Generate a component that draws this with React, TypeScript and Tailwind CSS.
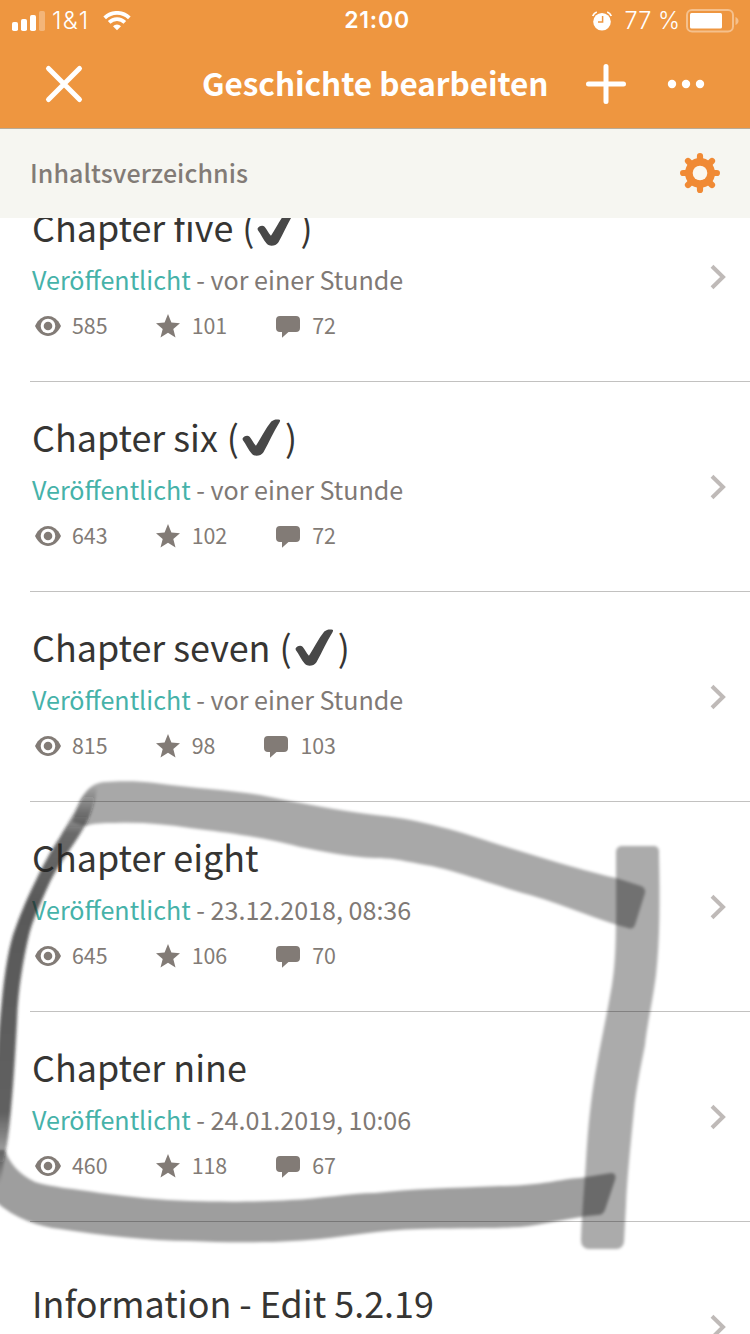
import type { ReactNode } from "react";

type Chapter = {
  title: string;
  checked?: boolean;
  date?: string;
  stats?: { views: number; votes: number; comments: number };
};

const chapters: Chapter[] = [
  { title: "Chapter five", checked: true, date: "vor einer Stunde", stats: { views: 585, votes: 101, comments: 72 } },
  { title: "Chapter six", checked: true, date: "vor einer Stunde", stats: { views: 643, votes: 102, comments: 72 } },
  { title: "Chapter seven", checked: true, date: "vor einer Stunde", stats: { views: 815, votes: 98, comments: 103 } },
  { title: "Chapter eight", date: "23.12.2018, 08:36", stats: { views: 645, votes: 106, comments: 70 } },
  { title: "Chapter nine", date: "24.01.2019, 10:06", stats: { views: 460, votes: 118, comments: 67 } },
  { title: "Information - Edit 5.2.19" },
];

function StatusBar() {
  return (
    <div className="flex h-[41px] items-center justify-between pl-3 pr-[11px] font-['Inter',sans-serif] text-white">
      <div className="flex w-[200px] items-center">
        <svg width="34" height="20" viewBox="0 0 34 20" fill="currentColor">
          <rect x="0" y="11" width="6" height="9" rx="1.8" />
          <rect x="9" y="8" width="6" height="12" rx="1.8" />
          <rect x="18" y="4" width="6" height="16" rx="1.8" />
          <rect x="27" y="0" width="6" height="20" rx="1.8" opacity="0.3" />
        </svg>
        <span className="ml-[6px] w-[38px] text-[24px] font-light tracking-[1.2px]">1&amp;1</span>
        <svg className="ml-[13px]" width="28" height="20" viewBox="0 0 30 21" fill="none" stroke="currentColor" strokeWidth="4">
          <path d="M1.8 7.2a18.7 18.7 0 0 1 26.4 0" />
          <path d="M6.6 12a11.9 11.9 0 0 1 16.8 0" />
          <path d="M15 20.5l-4.3-4.4a6.1 6.1 0 0 1 8.6 0z" fill="currentColor" stroke="none" />
        </svg>
      </div>
      <span className="pl-[3px] text-[23px] font-semibold tracking-[0.8px]">21:00</span>
      <div className="flex w-[200px] items-center justify-end">
        <svg width="20" height="20" viewBox="0 0 20 20">
          <circle cx="10" cy="10.7" r="8.8" fill="#fff" />
          <path d="M.8 5A7 7 0 0 1 4.8 1M19.2 5A7 7 0 0 0 15.2 1" fill="none" stroke="#fff" strokeWidth="1.8" />
          <path d="M10.6 5v6H6" fill="none" stroke="#ee9640" strokeWidth="1.5" />
        </svg>
        <span className="ml-[13px] text-[23.5px] font-light">77 %</span>
        <svg className="ml-[6px]" width="53" height="24" viewBox="0 0 53 24">
          <rect x="1" y="1" width="46" height="21.5" rx="5" fill="none" stroke="#fff" strokeWidth="2" opacity="0.4" />
          <rect x="4" y="4" width="32" height="15.5" rx="1.5" fill="#fff" />
          <path d="M49.5 8c4 1.5 4 6.5 0 8z" fill="#fff" opacity="0.4" />
        </svg>
      </div>
    </div>
  );
}

function NavBar() {
  return (
    <div className="flex h-[86px] items-center pl-[44px] text-white">
      <svg width="40" height="40" viewBox="0 0 40 40" stroke="currentColor" strokeWidth="5" strokeLinecap="round">
        <path d="M4.5 4.5l31 31M35.5 4.5l-31 31" />
      </svg>
      <h1 className="-mt-[5px] ml-[118px] w-[346px] whitespace-nowrap text-[31.5px] font-semibold leading-[40px] tracking-[-0.05px]">
        Geschichte bearbeiten
      </h1>
      <svg className="ml-[38px]" width="40" height="40" viewBox="0 0 40 40" stroke="currentColor" strokeWidth="5" strokeLinecap="round">
        <path d="M20 2.5v35M2.5 20h35" />
      </svg>
      <svg className="ml-[41px]" width="38" height="10" viewBox="0 0 38 10" fill="currentColor">
        <circle cx="5" cy="5" r="4.2" />
        <circle cx="19" cy="5" r="4.2" />
        <circle cx="33" cy="5" r="4.2" />
      </svg>
    </div>
  );
}

function GearIcon() {
  return (
    <svg className="-mt-[2px]" width="40" height="40" viewBox="-20 -20 40 40">
      <g stroke="#f08a35" strokeWidth="6.2" strokeLinecap="round">
        <path d="M0-16.9V16.9M-16.9 0H16.9M-12-12L12 12M12-12L-12 12" />
      </g>
      <circle r="15" fill="#f08a35" />
      <circle r="7.3" fill="#fbf8f0" />
    </svg>
  );
}

function CheckIcon() {
  return (
    <svg className="ml-[2px] mr-[3px] mt-[3px] shrink-0" width="41" height="40" viewBox="0 0 42 40" role="img" aria-label="✔">
      <path
        d="M1.6 20.5C2.5 18 6.8 16.6 8.8 18.6C11 21 12.5 25 15.3 28C20 21 25.5 10 31 3.2C33.5 .8 37 .7 39.5 1.3C40.5 1.7 40 3 39.3 4C33.5 13 29 24 23 34.5C20.5 38.3 14.5 39.5 11.3 36.5C7.500 32 5 26 1.8 22z"
        fill="#484848"
      />
    </svg>
  );
}

function EyeIcon() {
  return (
    <svg className="-mr-px" width="26" height="20" viewBox="0 0 26 20">
      <path d="M0 10C6-3.3 20-3.3 26 10C20 23.3 6 23.3 0 10z" fill="#827b76" />
      <circle cx="13" cy="10" r="7.3" fill="#fff" />
      <circle cx="13" cy="10" r="4.3" fill="#827b76" />
    </svg>
  );
}

function StarIcon() {
  return (
    <svg width="24" height="24" viewBox="0 0 24 24" fill="#827b76">
      <path d="M12 0l3.4 8.6 8.6.6-6.700 5.700 2.200 8.700L12 18.800l-7.500 4.800 2.200-8.700L0 9.200l8.600-.6z" />
    </svg>
  );
}

function CommentIcon() {
  return (
    <svg className="mt-[2px]" width="24" height="22" viewBox="0 0 24 22" fill="#827b76">
      <path d="M4 0h16a4 4 0 0 1 4 4v8a4 4 0 0 1-4 4h-7.5L6 21.8V16H4a4 4 0 0 1-4-4V4a4 4 0 0 1 4-4z" />
    </svg>
  );
}

function Stat({ icon, value }: { icon: ReactNode; value: number }) {
  return (
    <div className="flex items-center gap-3">
      {icon}
      <span className="-mt-[3px]">{value}</span>
    </div>
  );
}

function ChapterRow({ chapter }: { chapter: Chapter }) {
  const { title, checked, date, stats } = chapter;
  return (
    <li className="ml-[30px] flex h-[210px] items-center border-b border-[#c2c1c0] pr-[24px]">
      <div className={stats ? "flex h-full flex-1 flex-col pl-[2px] pt-[28px]" : "flex h-full flex-1 flex-col pl-[2px] pt-[54px]"}>
        <h2 className="flex h-[52px] items-center whitespace-nowrap text-[35.9px] leading-[52px] text-[#363533]">
          {title}
          {checked && (
            <>
              <span className="ml-[9px]">(</span>
              <CheckIcon />
              <span>)</span>
            </>
          )}
        </h2>
        {date && (
          <p className="mt-[9px] h-[36px] whitespace-nowrap text-[25.1px] leading-[36px] text-[#7f7975]">
            <span className="text-[#46b2a9]">Veröffentlicht</span> - {date}
          </p>
        )}
        {stats && (
          <div className="mt-[14px] flex h-[30px] items-center pl-[3px] text-[21.4px] leading-[30px] text-[#827b76]">
            <Stat icon={<EyeIcon />} value={stats.views} />
            <div className="w-12" />
            <Stat icon={<StarIcon />} value={stats.votes} />
            <div className="w-[49px]" />
            <Stat icon={<CommentIcon />} value={stats.comments} />
          </div>
        )}
      </div>
      <svg width="16" height="26" viewBox="0 0 16 26" fill="none" stroke="#bfbab8" strokeWidth="4">
        <path d="M2 2.2l11 10.8L2 23.8" />
      </svg>
    </li>
  );
}

// Translucent marker strokes drawn over the last chapters
function MarkerOverlay() {
  return (
    <svg className="pointer-events-none absolute left-0 top-0" width="750" height="1334" viewBox="0 0 750 1334">
      <defs>
        <filter id="soft" x="-5%" y="-5%" width="110%" height="110%">
          <feGaussianBlur stdDeviation="1.4" />
        </filter>
        <linearGradient id="side" gradientUnits="userSpaceOnUse" x1="0" y1="785" x2="0" y2="1185">
          <stop offset="0" stopColor="#222" stopOpacity="0" />
          <stop offset="0.06" stopColor="#222" stopOpacity="0.35" />
          <stop offset="0.12" stopColor="#222" stopOpacity="0.68" />
          <stop offset="0.3" stopColor="#222" stopOpacity="0.75" />
          <stop offset="0.82" stopColor="#222" stopOpacity="0.72" />
          <stop offset="0.93" stopColor="#222" stopOpacity="0.4" />
          <stop offset="1" stopColor="#222" stopOpacity="0" />
        </linearGradient>
      </defs>
      <g filter="url(#soft)">
        <path
          opacity="0.34"
          d="M80 800C87 788 95 782 106 782C120 781 140 781 155 783C190 788 230 790 260 795C300 803 340 811 375 815C410 818 450 828 500 845C540 857 580 870 616 878L641 886Q646 888 645 893L635 925Q633 930 628 928C600 921 570 907 530 895C490 884 450 868 420 864C400 860 390 858 375 858C350 857 320 851 300 847C260 836 220 832 190 828C165 824 140 822 115 823C103 823 93 823 86 826L72 822z"
        />
        <path
          fill="url(#side)"
          d="M91 787C82 796 76 810 60 837C50 852 44 864 37 878C25 902 19 918 13 935C7 955 4 980 2 1000C0 1020-3 1050-4 1080L-4 1185L0 1185C3 1170 4 1160 6 1150C8 1140 9 1130 10 1120C13 1090 15 1060 17 1020C18 990 23 960 29 935C32 922 40 904 50 882C55 871 66 855 75 842C85 827 94 812 97 788z"
        />
        <path
          opacity="0.38"
          d="M5 1150C9 1162 18 1174 35 1182C50 1187 75 1189 100 1193C130 1197 160 1200 190 1201C220 1202 260 1202 290 1200C320 1199 350 1193 375 1193C410 1189 450 1188 500 1186C540 1186 560 1179 580 1178L611 1173Q617 1173 615 1180L605 1210Q603 1215 598 1215C570 1217 545 1225 520 1227C480 1229 450 1228 420 1229C380 1230 350 1236 320 1239C280 1243 230 1243 190 1241C150 1241 100 1235 60 1229C40 1227 15 1219-5 1201L-5 1150z"
        />
        <path
          opacity="0.33"
          d="M621 846L655 846Q660 847 659 855C660 900 660 940 656 975C652 1005 648 1020 645 1045C640 1070 636 1090 634 1110C630 1150 627 1180 626 1205L624 1242Q623 1248 617 1249L588 1249Q581 1248 581 1240C582 1210 585 1180 586 1160C588 1125 591 1100 595 1075C600 1045 607 1015 612 985C617 955 616 920 616 852Q616 847 621 846z"
        />
      </g>
    </svg>
  );
}

export default function App() {
  return (
    <div className="relative flex h-[1334px] w-[750px] flex-col overflow-hidden bg-white font-['Noto_Sans_CJK_JP','Noto_Sans',sans-serif]">
      <header className="h-[129px] shrink-0 border-b border-[#b8ab98] bg-[#ee9640]">
        <StatusBar />
        <NavBar />
      </header>
      <div className="flex h-[89px] shrink-0 items-center justify-between bg-[#f6f6f1] pl-[30px] pr-[30px]">
        <span className="-mt-[2px] text-[25px] font-medium tracking-[0.08px] text-[#827b76]">Inhaltsverzeichnis</span>
        <GearIcon />
      </div>
      <main className="min-h-0 flex-1 overflow-hidden">
        <ul className="-mt-[46px]">
          {chapters.map((chapter) => (
            <ChapterRow key={chapter.title} chapter={chapter} />
          ))}
        </ul>
      </main>
      <MarkerOverlay />
    </div>
  );
}
